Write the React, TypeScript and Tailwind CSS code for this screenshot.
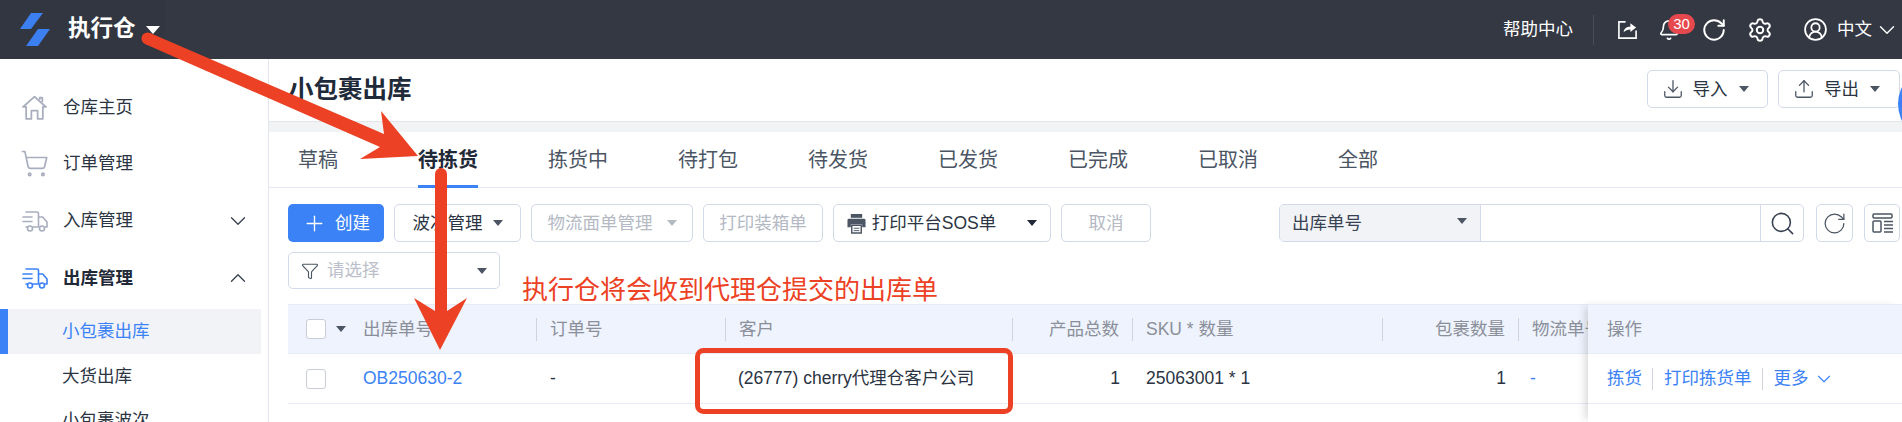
import React from 'react';
import { ChevronDown, ChevronUp, Settings, RotateCw, CircleUserRound, Bell, Download, Upload, Search, Filter, Plus, ShoppingCart } from 'lucide-react';

const Caret = ({ className = 'border-t-[#4b5563]' }: { className?: string }) => (
  <span className={`inline-block w-0 h-0 border-l-[5px] border-r-[5px] border-t-[6px] border-l-transparent border-r-transparent ${className}`} />
);

const Truck = ({ className }: { className: string }) => (
  <svg viewBox="0 0 26 24" fill="none" stroke="currentColor" strokeWidth="1.6" strokeLinecap="round" strokeLinejoin="round" className={className}>
    <path d="M4 3h11a1.5 1.5 0 0 1 1.500 1.500V18H11" />
    <path d="M16.500 8h4.200L25 13v5h-2" />
    <circle cx="8" cy="19.500" r="2.500" />
    <circle cx="20" cy="19.500" r="2.500" />
    <path d="M1 8h9M1 12.500h9M4 18h1.500" />
  </svg>
);

const HomeIcon = () => (
  <svg viewBox="0 0 24 24" fill="none" stroke="#a9aebf" strokeWidth="1.700" strokeLinejoin="round" className="w-[25px] h-[25px]">
    <path d="M12 1.500 23 11.500h-3V23h-5v-8H9v8H4V11.500H1z" />
    <path d="M17 4.500V2.500h2.500V7" />
  </svg>
);

const ShareBox = () => (
  <svg viewBox="0 0 22 22" fill="none" stroke="white" strokeWidth="1.700" className="w-[21px] h-[21px]">
    <path d="M9 3H2v17h18v-8" />
    <path d="M7 14c0-4 3-6 7-6V4.500L20 9l-6 4.500V11c-3 0-5 1-7 3z" fill="white" stroke="none" />
  </svg>
);

const ColumnsIcon = () => (
  <svg viewBox="0 0 21 20" fill="none" stroke="#4b5563" strokeWidth="1.500" className="w-[21px] h-[20px]">
    <rect x="1" y="1" width="19" height="4" rx="1" />
    <rect x="1" y="8" width="8" height="11" rx="1" />
    <path d="M12 8.500h9M12 12h9M12 15.500h9M12 19h9" />
  </svg>
);

const Printer = () => (
  <svg viewBox="0 0 20 22" className="w-[19px] h-[21px]">
    <path d="M4 1h12v4H4z" fill="#4b5563" />
    <path d="M2 6h16a1.500 1.500 0 0 1 1.500 1.500V15H16v-3H4v3H.5V7.500A1.500 1.500 0 0 1 2 6z" fill="#4b5563" />
    <path d="M5 13h10v8H5z" fill="white" stroke="#4b5563" strokeWidth="1.500" />
    <path d="M7 16h6M7 18.500h6" stroke="#4b5563" />
  </svg>
);

const Btn = ({ w, children, disabled }: { w: string; children: React.ReactNode; disabled?: boolean }) => (
  <div className={`${w} h-[38px] shrink-0 flex items-center justify-center rounded-[5px] border border-[#d3d9e8] bg-white text-[17.500px] ${disabled ? 'text-[#b4b9c4]' : 'text-[#2b3442]'}`}>
    {children}
  </div>
);

const NavItem = ({ icon, label, h, chevron, active }: { icon: React.ReactNode; label: string; h: string; chevron?: 'up' | 'down'; active?: boolean }) => (
  <div className={`${h} flex items-center pl-[22px] pr-[17px]`}>
    <span className="w-[41px] shrink-0 flex">{icon}</span>
    <span className={`text-[17.500px] flex-1 ${active ? 'font-bold text-[#1f2937]' : 'text-[#2b3442]'}`}>{label}</span>
    {chevron === 'down' && <ChevronDown className="w-[26px] h-[26px] text-[#374151]" strokeWidth={1.200} />}
    {chevron === 'up' && <ChevronUp className="w-[26px] h-[26px] text-[#374151]" strokeWidth={1.200} />}
  </div>
);

const tabs = ['草稿', '待拣货', '拣货中', '待打包', '待发货', '已发货', '已完成', '已取消', '全部'];

const Head = ({ w, children, right }: { w: string; children?: React.ReactNode; right?: boolean }) => (
  <div className={`${w} shrink-0 h-full flex items-center relative overflow-hidden`}>
    <span className="w-px h-[23px] bg-[#cfd3dc] shrink-0" />
    <span className={`flex-1 whitespace-nowrap ${right ? 'text-right pr-[13px]' : 'pl-[13px]'}`}>{children}</span>
  </div>
);

export default function App() {
  return (
    <div className="relative w-[1902px] h-[422px] overflow-hidden bg-white flex flex-col font-['Liberation_Sans','Noto_Sans_CJK_SC',sans-serif]">
      <header className="h-[59px] shrink-0 bg-[#343843] flex items-center text-white">
        <div className="w-[165px] h-full flex items-center pl-[20px] bg-[#323640]">
          <svg viewBox="0 0 30 33" className="w-[30px] h-[33px]">
            <path d="M11 0h12L11 16H0z" fill="#3b7ff0" />
            <path d="M18 16h12L18 33H6z" fill="#3b7ff0" />
          </svg>
          <span className="ml-[18px] text-[22.500px] font-bold leading-none">执行仓</span>
          <span className="ml-[10px] mt-[1px] w-0 h-0 border-l-[7px] border-r-[7px] border-t-[8px] border-l-transparent border-r-transparent border-t-white" />
        </div>
        <div className="flex-1 h-full flex items-center justify-end pr-[2px]">
          <span className="text-[17.500px]">帮助中心</span>
          <span className="w-px h-[30px] bg-[#4a4e59] ml-[20px] mr-[23px]" />
          <ShareBox />
          <div className="relative ml-[20px] w-[22px] h-[22px]">
            <Bell className="w-[22px] h-[22px]" strokeWidth={1.800} />
            <span className="absolute left-[10px] top-[-5px] w-[27px] h-[20px] rounded-full bg-[#e5484d] text-[15px] leading-[20px] text-center">30</span>
          </div>
          <RotateCw className="ml-[21px] w-[26px] h-[26px]" strokeWidth={1.800} />
          <Settings className="ml-[20px] w-[26px] h-[26px]" strokeWidth={1.800} />
          <CircleUserRound className="ml-[30px] w-[25px] h-[25px]" strokeWidth={1.700} />
          <span className="ml-[9px] text-[17.500px]">中文</span>
          <ChevronDown className="ml-[2px] w-[26px] h-[26px]" strokeWidth={1.300} />
        </div>
      </header>

      <div className="flex-1 flex min-h-0">
        <aside className="w-[269px] shrink-0 border-r border-[#e4e6ee] pt-[20px] overflow-hidden">
          <NavItem h="h-[56px]" label="仓库主页" icon={<HomeIcon />} />
          <NavItem h="h-[57px]" label="订单管理" icon={<ShoppingCart className="-ml-[2px] w-[29px] h-[29px] text-[#a9aebf]" strokeWidth={1.400} />} />
          <NavItem h="h-[57px]" label="入库管理" chevron="down" icon={<Truck className="w-[26px] h-[24px] text-[#a9aebf]" />} />
          <NavItem h="h-[58px]" label="出库管理" chevron="up" active icon={<Truck className="w-[26px] h-[24px] text-[#3b82f6]" />} />
          <div className="mt-[2px] h-[45px] w-[261px] flex items-center bg-[#f2f3f6] border-l-[8px] border-[#3b82f6] pl-[54px] text-[17.500px] text-[#3b82f6]">小包裹出库</div>
          <div className="h-[44px] flex items-center pl-[62px] text-[17.500px] text-[#2b3442]">大货出库</div>
          <div className="h-[44px] flex items-center pl-[62px] text-[17.500px] text-[#2b3442]">小包裹波次</div>
        </aside>

        <main className="flex-1 min-w-0 flex flex-col">
          <div className="h-[63px] shrink-0 border-b border-[#e3e5ea] flex items-center pl-[20px] pr-[2px]">
            <h1 className="text-[24.500px] font-bold text-[#1f2a3a] flex-1">小包裹出库</h1>
            <div className="flex gap-[10px] mb-[2px]">
              <Btn w="w-[121px]">
                <Download className="w-[22px] h-[22px] text-[#4b5563]" strokeWidth={1.400} />
                <span className="ml-[9px] mr-[11px]">导入</span>
                <Caret className="border-t-[#4b5563] mr-[5px]" />
              </Btn>
              <Btn w="w-[122px]">
                <Upload className="w-[22px] h-[22px] text-[#4b5563]" strokeWidth={1.400} />
                <span className="ml-[9px] mr-[11px]">导出</span>
                <Caret className="border-t-[#4b5563] mr-[5px]" />
              </Btn>
            </div>
          </div>
          <div className="h-[10px] shrink-0 bg-[#f2f3f5]" />

          <div className="h-[56px] shrink-0 border-b border-[#e4e7f5] flex pl-[19px] gap-[70px]">
            {tabs.map((t, i) => (
              <div key={t} className={`min-w-[60px] h-[56px] flex items-center justify-center text-[20px] ${i === 1 ? 'border-b-[3px] border-[#3b82f6] font-bold text-[#1f2937] pt-[3px]' : 'text-[#4b5563]'}`}>{t}</div>
            ))}
          </div>

          <div className="flex pl-[19px] pt-[16px] gap-[10px] h-[54px] shrink-0">
            <div className="w-[96px] h-[38px] shrink-0 rounded-[5px] bg-[#3b82f6] text-white text-[17.500px] flex items-center justify-center">
              <Plus className="w-[25px] h-[25px]" strokeWidth={1.300} />
              <span className="ml-[8px]">创建</span>
            </div>
            <Btn w="w-[127px]"><span className="mr-[10px]">波次管理</span><Caret /></Btn>
            <Btn w="w-[162px]" disabled><span className="mr-[14px]">物流面单管理</span><Caret className="border-t-[#b4b9c4]" /></Btn>
            <Btn w="w-[120px]" disabled>打印装箱单</Btn>
            <Btn w="w-[218px]">
              <Printer />
              <span className="ml-[6px] mr-[31px]">打印平台SOS单</span>
              <Caret className="border-t-[#1f2937]" />
            </Btn>
            <Btn w="w-[90px]" disabled>取消</Btn>
            <div className="ml-[118px] flex h-[38px] w-[525px] shrink-0 rounded-[5px] border border-[#d3d9e8] overflow-hidden">
              <div className="w-[201px] bg-[#f2f3f6] border-r border-[#d3d9e8] flex items-center pl-[12px] pr-[13px] justify-between text-[17.500px] text-[#374151]">
                <span>出库单号</span><Caret className="border-t-[#4b5563] mb-[4px]" />
              </div>
              <div className="flex-1" />
              <div className="w-[43px] border-l border-[#d3d9e8] flex items-center justify-center">
                <Search className="w-[27px] h-[27px] text-[#374151]" strokeWidth={1.400} />
              </div>
            </div>
            <div className="ml-[2px] w-[37px] h-[38px] shrink-0 rounded-[5px] border border-[#d3d9e8] flex items-center justify-center">
              <RotateCw className="w-[25px] h-[25px] text-[#4b5563]" strokeWidth={1.200} />
            </div>
            <div className="ml-[1px] w-[36px] h-[38px] shrink-0 rounded-[5px] border border-[#d3d9e8] flex items-center justify-center">
              <ColumnsIcon />
            </div>
          </div>

          <div className="pl-[19px] pt-[10px] h-[62px] shrink-0">
            <div className="w-[212px] h-[37px] rounded-[5px] border border-[#d3d9e8] flex items-center pl-[12px] pr-[12px] text-[17.500px] text-[#bcc0ca]">
              <Filter className="w-[18px] h-[18px] text-[#4b5563]" strokeWidth={1.500} />
              <span className="ml-[8px] flex-1">请选择</span>
              <Caret className="border-t-[#4b5563]" />
            </div>
          </div>

          <div className="pl-[19px] flex-1 flex min-h-0">
            <div className="w-[1300px] shrink-0 overflow-hidden">
              <div className="h-[50px] flex items-center bg-[#eef3fd] border-y border-[#e8ebf3] text-[17.500px] text-[#8b8f9a]">
                <div className="w-[248px] shrink-0 flex items-center pl-[18px] h-full">
                  <span className="w-[20px] h-[20px] rounded-[3px] border border-[#c9cdd8] bg-white" />
                  <Caret className="ml-[10px] border-t-[#4b5563]" />
                  <span className="ml-[17px]">出库单号</span>
                </div>
                <Head w="w-[189px]">订单号</Head>
                <Head w="w-[287px]">客户</Head>
                <Head w="w-[120px]" right>产品总数</Head>
                <Head w="w-[250px]">SKU * 数量</Head>
                <Head w="w-[136px]" right>包裹数量</Head>
                <Head w="w-[70px]">物流单号</Head>
              </div>
              <div className="h-[50px] flex items-center border-b border-[#e8ebf3] text-[17.500px] text-[#2b3442]">
                <div className="w-[248px] shrink-0 flex items-center pl-[18px]">
                  <span className="w-[20px] h-[20px] rounded-[3px] border border-[#c9cdd8] bg-white" />
                  <span className="ml-[37px] text-[#3b82f6]">OB250630-2</span>
                </div>
                <div className="w-[189px] shrink-0 pl-[14px]">-</div>
                <div className="w-[287px] shrink-0 pl-[13px] whitespace-nowrap">(26777) cherry代理仓客户公司</div>
                <div className="w-[120px] shrink-0 text-right pr-[12px]">1</div>
                <div className="w-[250px] shrink-0 pl-[14px]">25063001 * 1</div>
                <div className="w-[136px] shrink-0 text-right pr-[12px]">1</div>
                <div className="w-[70px] shrink-0 pl-[12px] text-[#3b82f6]">-</div>
              </div>
            </div>
            <div className="flex-1 relative bg-white shadow-[-6px_0_8px_-3px_rgba(0,0,0,0.15)]">
              <div className="h-[50px] flex items-center bg-[#eef3fd] border-y border-[#e8ebf3] pl-[19px] text-[17.500px] text-[#8b8f9a]">操作</div>
              <div className="h-[50px] flex items-center border-b border-[#e8ebf3] pl-[19px] text-[17.500px] text-[#3b82f6]">
                <span>拣货</span>
                <span className="w-px h-[22px] bg-[#cfd3dc] ml-[10px] mr-[11px]" />
                <span>打印拣货单</span>
                <span className="w-px h-[22px] bg-[#cfd3dc] ml-[10px] mr-[11px]" />
                <span>更多</span>
                <ChevronDown className="ml-[4px] w-[22px] h-[22px]" strokeWidth={1.200} />
              </div>
            </div>
          </div>
        </main>
      </div>

      <div className="absolute left-[1898px] top-[66px] w-[76px] h-[76px] rounded-full bg-[#3b82f6]" />

      {/* Red annotations lying over the page */}
      <svg className="absolute left-0 top-0 pointer-events-none" width="1902" height="422" viewBox="0 0 1902 422">
        <g fill="#ec4124">
          <circle cx="147.500" cy="38.500" r="6" />
          <polygon points="150,33 384,134 381,111 418,156 360,159 380,147 145,44" />
          <circle cx="441" cy="174" r="6" />
          <polygon points="435,174 447,174 447,311 467,298 440,350 414,298 435,311" />
        </g>
        <rect x="697.500" y="350.500" width="313" height="61" rx="6" fill="none" stroke="#ec4124" strokeWidth="5" />
      </svg>
      <div className="absolute left-[522px] top-[275px] text-[26px] leading-[30px] text-[#ec4124] whitespace-nowrap">执行仓将会收到代理仓提交的出库单</div>
    </div>
  );
}
